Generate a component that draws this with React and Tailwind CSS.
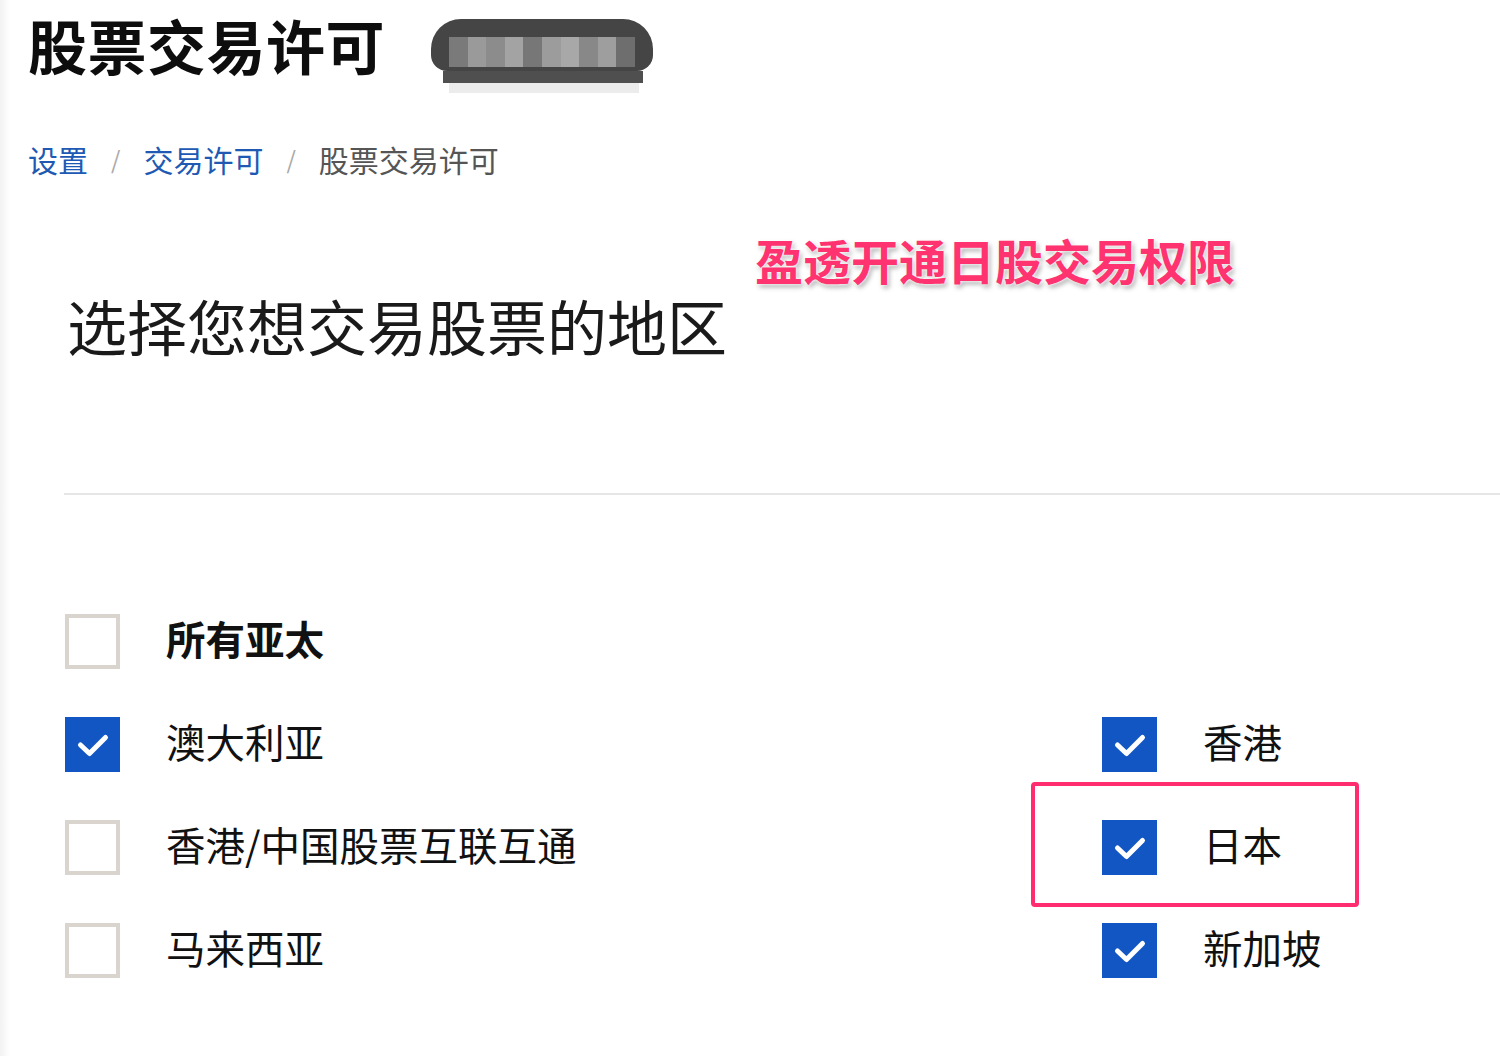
import React from "react";

const font = { fontFamily: '"Noto Sans CJK SC", "Noto Sans", sans-serif' };

const Check = () => (
  <svg width="34" height="26" viewBox="0 0 34 26" fill="none">
    <path
      d="M4.5 13 L13.5 21.5 L29.5 5.5"
      stroke="white"
      strokeWidth="5"
      strokeLinecap="round"
      strokeLinejoin="round"
    />
  </svg>
);

const Box = ({ checked }) =>
  checked ? (
    <div className="w-[55px] h-[55px] bg-[#1256c4] flex items-center justify-center shrink-0">
      <Check />
    </div>
  ) : (
    <div className="w-[55px] h-[55px] border-[4px] border-[#d9d4ce] bg-white shrink-0" />
  );

const Option = ({ label, checked, bold, children }) => (
  <div className="relative flex items-center gap-[46px] h-[55px]">
    <Box checked={checked} />
    <span
      className={`text-[39.5px] leading-none text-[#111] mb-[7px] ${bold ? "font-bold" : ""}`}
    >
      {label}
    </span>
    {children}
  </div>
);

const Pill = () => (
  <div className="flex flex-col mt-[4px]">
    <div className="w-[222px] h-[52px] rounded-t-[30px] rounded-b-[16px] bg-[#454545] flex items-end px-[18px] pb-[4px]">
      <div className="flex w-full h-[30px]">
        <div className="flex-1 bg-[#7a7a7a]" />
        <div className="flex-1 bg-[#9a9a9a]" />
        <div className="flex-1 bg-[#8c8c8c]" />
        <div className="flex-1 bg-[#a3a3a3]" />
        <div className="flex-1 bg-[#777]" />
        <div className="flex-1 bg-[#9c9c9c]" />
        <div className="flex-1 bg-[#a8a8a8]" />
        <div className="flex-1 bg-[#888]" />
        <div className="flex-1 bg-[#9e9e9e]" />
        <div className="flex-1 bg-[#6e6e6e]" />
      </div>
    </div>
    <div className="ml-[12px] w-[200px] h-[12px] bg-[#4f4f4f]" />
    <div className="ml-[18px] w-[190px] h-[10px] bg-[#ececec]" />
  </div>
);

export default function App() {
  return (
    <div className="w-[1500px] h-[1056px] bg-white flex overflow-hidden" style={font}>
      <div className="w-[10px] h-full bg-gradient-to-r from-[#f2f2f2] to-white shrink-0" />
      <div className="relative flex-1 flex flex-col">
        <div className="flex items-start gap-[46px] pt-[15px] pl-[18px]">
          <h1 className="text-[59px] leading-none font-bold text-[#0d0d0d] tracking-[0.5px]">
            股票交易许可
          </h1>
          <Pill />
        </div>

        <div className="flex items-center pl-[18px] mt-[51px] text-[30px] leading-none">
          <span className="text-[#2059b3]">设置</span>
          <span className="mx-[23px] text-[#aaa] text-[24px]">/</span>
          <span className="text-[#2059b3]">交易许可</span>
          <span className="mx-[23px] text-[#aaa] text-[24px]">/</span>
          <span className="text-[#555]">股票交易许可</span>
        </div>

        <div className="absolute left-[745px] top-[235px] text-[48px] leading-none font-bold text-[#ff3370] [text-shadow:0_0_2px_#fff,0_0_4px_#fff,2px_3px_5px_rgba(0,0,0,0.35)]">
          盈透开通日股交易权限
        </div>

        <h2 className="pl-[57px] mt-[121px] text-[60px] leading-none text-[#1a1a1a]">
          选择您想交易股票的地区
        </h2>

        <div className="ml-[54px] mt-[138px] h-[2px] bg-[#e6e6e6]" />

        <div className="ml-[55px] mt-[119px] grid grid-cols-[1037px_1fr] gap-y-[48px]">
          <Option label="所有亚太" bold />
          <div />
          <Option label="澳大利亚" checked />
          <Option label="香港" checked />
          <Option label="香港/中国股票互联互通" />
          <Option label="日本" checked>
            <div className="absolute left-[-71px] top-[-38px] w-[328px] h-[125px] border-[4px] border-[#ff2d6f] rounded-[4px]" />
          </Option>
          <Option label="马来西亚" />
          <Option label="新加坡" checked />
        </div>
      </div>
    </div>
  );
}
